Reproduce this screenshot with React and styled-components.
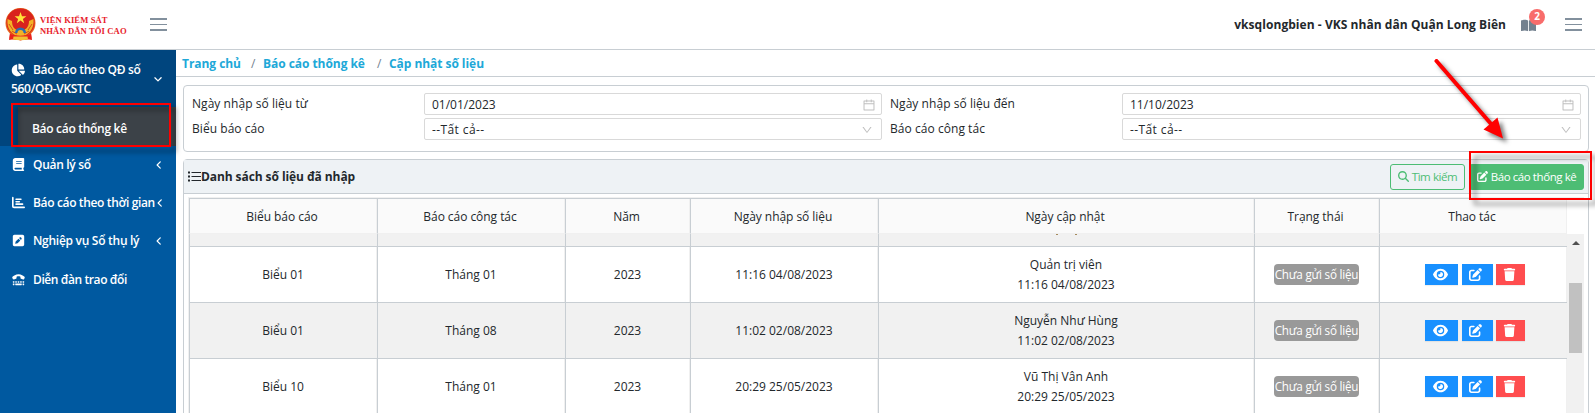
import React from 'react';
import styled, { createGlobalStyle } from 'styled-components';
import { FaChartPie, FaBook, FaChartBar, FaTty, FaMagnifyingGlass, FaEye, FaTrash, FaAngleLeft, FaAngleDown, FaBookOpen, FaSquarePen, FaPenToSquare } from 'react-icons/fa6';
import { AiOutlineCalendar, AiOutlineDown } from 'react-icons/ai';

const line = '#c8ced3';

const GlobalStyle = createGlobalStyle`
  * { box-sizing: border-box; }
  body {
    margin: 0;
    background: #fff;
    color: #23282c;
    font: 12px/19px "Open Sans", "Noto Sans", sans-serif;
    overflow: hidden;
  }
  svg { display: block; flex: none; }
`;

const Page = styled.div`
  position: relative;
  display: flex;
  flex-direction: column;
  width: 1595px;
  height: 413px;
  overflow: hidden;
`;

const Header = styled.header`
  display: flex;
  align-items: center;
  flex: none;
  height: 50px;
  padding: 0 13px 0 5px;
  border-bottom: 1px solid ${line};
`;

const Brand = styled.div`
  display: flex;
  align-items: center;
  width: 145px;
  gap: 4px;
`;

const BrandName = styled.div`
  color: #e8202a;
  font: bold 8.6px/11px "Liberation Serif", serif;
  padding-top: 2px;
  white-space: nowrap;
`;

const BrandLine = styled.div`
  letter-spacing: ${(p) => p.$spacing}px;
`;

const Burger = styled.button`
  display: flex;
  flex-direction: column;
  gap: 4px;
  width: 17px;
  padding: 0;
  border: 0;
  background: none;
`;

const BurgerLine = styled.span`
  height: 1.6px;
  background: #82909d;
`;

const User = styled.div`
  margin-left: auto;
  font-weight: 700;
  letter-spacing: ${(p) => p.$spacing}px;
  white-space: nowrap;
`;

const Notice = styled.div`
  position: relative;
  margin: 2px 29px 0 15px;
  color: #73818f;
`;

const Count = styled.span`
  position: absolute;
  left: 8px;
  top: -9px;
  width: 16px;
  height: 16px;
  border-radius: 50%;
  background: #f86c6b;
  color: #fff;
  font-size: 10px;
  font-weight: 700;
  line-height: 15px;
  text-align: center;
`;

const Body = styled.div`
  display: flex;
  flex: 1;
  min-height: 0;
`;

const Sidebar = styled.nav`
  flex: none;
  width: 176px;
  background: #0059a0;
  color: #fff;
  font-weight: 600;
`;

const OpenGroup = styled.div`
  height: 96px;
  background: #00457e;
`;

const GroupTitle = styled.div`
  display: flex;
  align-items: center;
  justify-content: space-between;
  height: 57px;
  padding: 1px 13px 0 11px;
`;

const GroupText = styled.div`
  letter-spacing: ${(p) => p.$spacing}px;
  white-space: nowrap;
`;

const GroupLine = styled.div`
  display: flex;
  align-items: center;
  gap: 8px;
`;

const SubItem = styled.div`
  display: flex;
  align-items: center;
  height: 39px;
  margin-left: 18px;
  padding: 4px 0 0 14px;
  background: #3c4248;
  letter-spacing: ${(p) => p.$spacing}px;
`;

const NavItem = styled.div`
  display: flex;
  align-items: center;
  height: 38.2px;
  padding: 0 12px 1px 12px;
`;

const NavLabel = styled.span`
  flex: 1;
  margin-left: 8px;
  letter-spacing: ${(p) => p.$spacing || 0}px;
  white-space: nowrap;
`;

const Main = styled.main`
  display: flex;
  flex-direction: column;
  flex: 1;
  min-width: 0;
`;

const Crumbs = styled.div`
  display: flex;
  flex: none;
  height: 27px;
  padding: 4px 0 0 6px;
  border-bottom: 1px solid ${line};
  color: #20a8d8;
  font-weight: 700;
`;

const Crumb = styled.span`
  width: ${(p) => p.$width}px;
  letter-spacing: -0.05px;
  white-space: nowrap;
`;

const Slash = styled.span`
  width: 12px;
  color: #73818f;
  font-weight: 400;
`;

const Filters = styled.section`
  display: grid;
  flex: none;
  grid-template-columns: 232px 458px 240px 459px;
  grid-auto-rows: 22px;
  row-gap: 3px;
  height: 67px;
  margin: 8px 6px 0 7px;
  padding: 7px 0 0 8px;
  border: 1px solid ${line};
  border-radius: 4px;
`;

const FieldLabel = styled.label`
  padding-left: ${(p) => p.$indent || 0}px;
  line-height: 21px;
  letter-spacing: 0.05px;
`;

const Field = styled.div`
  display: flex;
  align-items: center;
  justify-content: space-between;
  padding: 1px ${(p) => (p.$select ? 8 : 5)}px 0 7px;
  border: 1px solid #d9d9d9;
  border-radius: 2px;
  letter-spacing: ${(p) => (p.$select ? 0.4 : 0)}px;
  svg { color: #bfbfbf; }
`;

const List = styled.section`
  display: flex;
  flex-direction: column;
  flex: none;
  height: 270px;
  margin: 7px 6px 0 7px;
  border: 1px solid ${line};
  border-radius: 4px;
`;

const ListHead = styled.div`
  display: flex;
  align-items: center;
  flex: none;
  height: 34px;
  padding: 0 4px;
  border-bottom: 1px solid ${line};
  background: #eef2f5;
`;

const ListTitle = styled.h2`
  margin: 0 auto 0 0;
  font-size: 12px;
  font-weight: 700;
  letter-spacing: -0.08px;
`;

const Button = styled.button`
  display: flex;
  align-items: center;
  justify-content: center;
  gap: ${(p) => p.$gap}px;
  width: ${(p) => p.$width}px;
  height: 26px;
  margin-left: 4px;
  padding: 0;
  border: 1px solid #4dbd74;
  border-radius: 3px;
  background: ${(p) => (p.$solid ? '#4dbd74' : 'transparent')};
  color: ${(p) => (p.$solid ? '#fff' : '#4dbd74')};
  font: 11.5px/19px "Open Sans", "Noto Sans", sans-serif;
  letter-spacing: -0.42px;
  white-space: nowrap;
`;

const TableArea = styled.div`
  flex: 1;
  min-height: 0;
  margin: 3px 4px 0 4px;
  border-top: 1px solid #f0f0f0;
  border-left: 1px solid #f0f0f0;
  overflow: hidden;
`;

const columns = '188px 188px 125px 188px 376px 125px 188px';

const HeadRow = styled.div`
  display: grid;
  grid-template-columns: ${columns};
  height: 36px;
  border-top: 1px solid ${line};
`;

const Cell = styled.div`
  display: flex;
  flex-direction: column;
  align-items: center;
  justify-content: center;
  border-left: 1px solid ${line};
  border-right: 1px solid #f0f0f0;
  line-height: 20px;
  white-space: nowrap;
`;

const HeadCell = styled(Cell)`
  padding: 2px 2px 0 0;
  background: #fafafa;
  font-weight: 500;
  letter-spacing: -0.05px;
  border-bottom: 1px solid #f0f0f0;
`;

const Scroller = styled.div`
  display: flex;
  height: 200px;
`;

const Rows = styled.div`
  width: 1378px;
`;

const Row = styled.div`
  display: grid;
  grid-template-columns: ${columns};
  height: ${(p) => p.$height || 56}px;
  border-bottom: 1px solid ${line};
  background: ${(p) => (p.$shaded ? '#f1f1f1' : '#fff')};
`;

const ScrolledCell = styled(Cell)`
  flex-direction: row;
  align-items: flex-start;
  gap: 17px;
`;

const Mark = styled.span`
  width: 2px;
  height: 1px;
  background: #a58a5c;
`;

const Value = styled.span``;

const Status = styled.span`
  width: 85px;
  height: 21px;
  border-radius: 4px;
  background: #999;
  color: #fff;
  font-size: 11.7px;
  line-height: 21px;
  text-align: center;
  letter-spacing: -0.22px;
`;

const Actions = styled.div`
  display: flex;
  gap: 3.5px;
  padding-left: 4px;
`;

const Action = styled.button`
  display: flex;
  align-items: center;
  justify-content: center;
  width: ${(p) => p.$width}px;
  height: 21px;
  padding: 0 ${(p) => p.$trim || 3}px 0 0;
  border: 0;
  background: ${(p) => (p.$danger ? '#ff4d4f' : '#1890ff')};
  color: #fff;
  box-shadow: 0 1px 1px rgba(0, 0, 0, 0.06);
`;

const Track = styled.div`
  display: flex;
  flex-direction: column;
  align-items: center;
  width: 17px;
  padding-top: 6px;
  background: #f1f1f1;
`;

const Thumb = styled.div`
  width: 13px;
  height: 70px;
  margin-top: 38px;
  background: #c1c1c1;
`;

const Highlight = styled.div`
  position: absolute;
  left: ${(p) => p.$x}px;
  top: ${(p) => p.$y}px;
  width: ${(p) => p.$w}px;
  height: ${(p) => p.$h}px;
  border: 2px solid #f00;
  filter: drop-shadow(5px 5px 2.5px rgba(0, 0, 0, 0.5));
`;

const Pointer = styled.svg`
  position: absolute;
  left: 1420px;
  top: 50px;
  filter: drop-shadow(4px 4px 2px rgba(0, 0, 0, 0.5));
`;

const Emblem = () => (
  <svg width="31" height="33" viewBox="0 0 31 33">
    <path d="M5 25h21l1 7-6-1-5.5 1.5L10 31l-6 1z" fill="#e8231c" />
    <circle cx="15.5" cy="15" r="15" fill="#e8651d" />
    <circle cx="15.5" cy="14.5" r="14" fill="#d9231d" />
    <path d="M2.500 11c-1 10 4 16 13 18C24 27 29.500 21 28.500 11l-4.500 2c0 6-3 9-8.500 10.500C9.500 22 7 19 7 13z" fill="#f3b326" />
    <path d="M4 16l4 6M7 23l5 3M27 16l-4 6M24 23l-5 3" stroke="#d84b1c" strokeWidth="1" />
    <path d="M15.500 4l1.500 4.200h4.400l-3.500 2.700 1.300 4.300-3.700-2.600-3.700 2.600 1.300-4.300-3.500-2.700H14z" fill="#ffe23a" />
    <path d="M10 25a5.500 5.500 0 0 1 11 0z" fill="#2d6fb0" />
    <path d="M12.500 25a3 3 0 0 1 6 0z" fill="#f3b326" />
    <path d="M5 26q10.500 3.500 21 0l.5 4.500q-11 3-22 0z" fill="#e8231c" />
    <path d="M8.500 28.500l14 0 .5 3q-7.500 1.500-15 0z" fill="#f3c033" />
  </svg>
);

const Menu = () => (
  <Burger><BurgerLine /><BurgerLine /><BurgerLine /></Burger>
);

const ListIcon = () => (
  <svg width="13" height="11" viewBox="0 0 13 11" fill="none" stroke="#23282c">
    <path d="M0 1.500h2M0 5.500h2M0 9.500h2" strokeWidth="2" />
    <path d="M3.500 1.500H13M3.500 5.500H13M3.500 9.500H13" strokeWidth="1.100" />
  </svg>
);

const nav = [
  { label: 'Quản lý sổ', icon: FaBook, arrow: true, spacing: -0.3 },
  { label: 'Báo cáo theo thời gian', icon: FaChartBar, arrow: true, spacing: -0.35 },
  { label: 'Nghiệp vụ Sổ thụ lý', icon: FaSquarePen, arrow: true, spacing: -0.28 },
  { label: 'Diễn đàn trao đổi', icon: FaTty, arrow: false, spacing: -0.4 },
];

const heads = ['Biểu báo cáo', 'Báo cáo công tác', 'Năm', 'Ngày nhập số liệu', 'Ngày cập nhật', 'Trạng thái', 'Thao tác'];

const rows = [
  { form: 'Biểu 01', period: 'Tháng 01', date: '11:16 04/08/2023', by: 'Quản trị viên' },
  { form: 'Biểu 01', period: 'Tháng 08', date: '11:02 02/08/2023', by: 'Nguyễn Như Hùng' },
  { form: 'Biểu 10', period: 'Tháng 01', date: '20:29 25/05/2023', by: 'Vũ Thị Vân Anh' },
];

export default function App() {
  return (
    <Page>
      <GlobalStyle />
      <Header>
        <Brand>
          <Emblem />
          <BrandName>
            <BrandLine $spacing={0.1}>VIỆN KIỂM SÁT</BrandLine>
            <BrandLine $spacing={0.1}>NHÂN DÂN TỐI CAO</BrandLine>
          </BrandName>
        </Brand>
        <Menu />
        <User $spacing={0.05}>vksqlongbien - VKS nhân dân Quận Long Biên</User>
        <Notice>
          <FaBookOpen size={15} />
          <Count>2</Count>
        </Notice>
        <Menu />
      </Header>
      <Body>
        <Sidebar>
          <OpenGroup>
            <GroupTitle>
              <GroupText $spacing={-0.3}>
                <GroupLine><FaChartPie size={14} />Báo cáo theo QĐ số</GroupLine>
                560/QĐ-VKSTC
              </GroupText>
              <FaAngleDown size={10} />
            </GroupTitle>
            <SubItem $spacing={-0.3}>Báo cáo thống kê</SubItem>
          </OpenGroup>
          {nav.map(({ label, icon: Icon, arrow, spacing }) => (
            <NavItem key={label}>
              <Icon size={13} />
              <NavLabel $spacing={spacing}>{label}</NavLabel>
              {arrow && <FaAngleLeft size={10} />}
            </NavItem>
          ))}
        </Sidebar>
        <Main>
          <Crumbs>
            <Crumb $width={69}>Trang chủ</Crumb>
            <Slash>/</Slash>
            <Crumb $width={114}>Báo cáo thống kê</Crumb>
            <Slash>/</Slash>
            <Crumb $width={100}>Cập nhật số liệu</Crumb>
          </Crumbs>
          <Filters>
            <FieldLabel>Ngày nhập số liệu từ</FieldLabel>
            <Field>01/01/2023<AiOutlineCalendar size={14} /></Field>
            <FieldLabel $indent={8}>Ngày nhập số liệu đến</FieldLabel>
            <Field>11/10/2023<AiOutlineCalendar size={14} /></Field>
            <FieldLabel>Biểu báo cáo</FieldLabel>
            <Field $select>--Tất cả--<AiOutlineDown size={12} /></Field>
            <FieldLabel $indent={8}>Báo cáo công tác</FieldLabel>
            <Field $select>--Tất cả--<AiOutlineDown size={12} /></Field>
          </Filters>
          <List>
            <ListHead>
              <ListIcon />
              <ListTitle>Danh sách số liệu đã nhập</ListTitle>
              <Button $width={75} $gap={3}><FaMagnifyingGlass size={11} />Tìm kiếm</Button>
              <Button $width={115} $gap={3} $solid><FaPenToSquare size={11} />Báo cáo thống kê</Button>
            </ListHead>
            <TableArea>
              <HeadRow>
                {heads.map((h) => <HeadCell key={h}>{h}</HeadCell>)}
              </HeadRow>
              <Scroller>
                <Rows>
                  <Row $shaded $height={13}>
                    {heads.map((h, i) => <ScrolledCell key={h}>{i === 4 && <><Mark /><Mark /></>}</ScrolledCell>)}
                  </Row>
                  {rows.map((r, i) => (
                    <Row key={r.date} $shaded={i === 1}>
                      <Cell><Value>{r.form}</Value></Cell>
                      <Cell><Value>{r.period}</Value></Cell>
                      <Cell><Value>2023</Value></Cell>
                      <Cell><Value>{r.date}</Value></Cell>
                      <Cell><Value>{r.by}</Value><Value>{r.date}</Value></Cell>
                      <Cell><Status>Chưa gửi số liệu</Status></Cell>
                      <Cell>
                        <Actions>
                          <Action $width={33} $trim={2}><FaEye size={15} /></Action>
                          <Action $width={31}><FaPenToSquare size={13} /></Action>
                          <Action $width={29} $danger><FaTrash size={13} /></Action>
                        </Actions>
                      </Cell>
                    </Row>
                  ))}
                </Rows>
                <Track>
                  <svg width="8" height="5" viewBox="0 0 8 5"><path d="M0 5l4-4 4 4z" fill="#505050" /></svg>
                  <Thumb />
                </Track>
              </Scroller>
            </TableArea>
          </List>
        </Main>
      </Body>
      <Highlight $x={11} $y={103} $w={160} $h={44} />
      <Highlight $x={1469} $y={151} $w={123} $h={49} />
      <Pointer width="100" height="100" viewBox="0 0 100 100">
        <path d="M16.500 11L72 75" stroke="#f00" strokeWidth="4" strokeLinecap="round" />
        <path d="M83 88.500L77.500 67.500 63.500 79.500z" fill="#f00" />
      </Pointer>
    </Page>
  );
}
